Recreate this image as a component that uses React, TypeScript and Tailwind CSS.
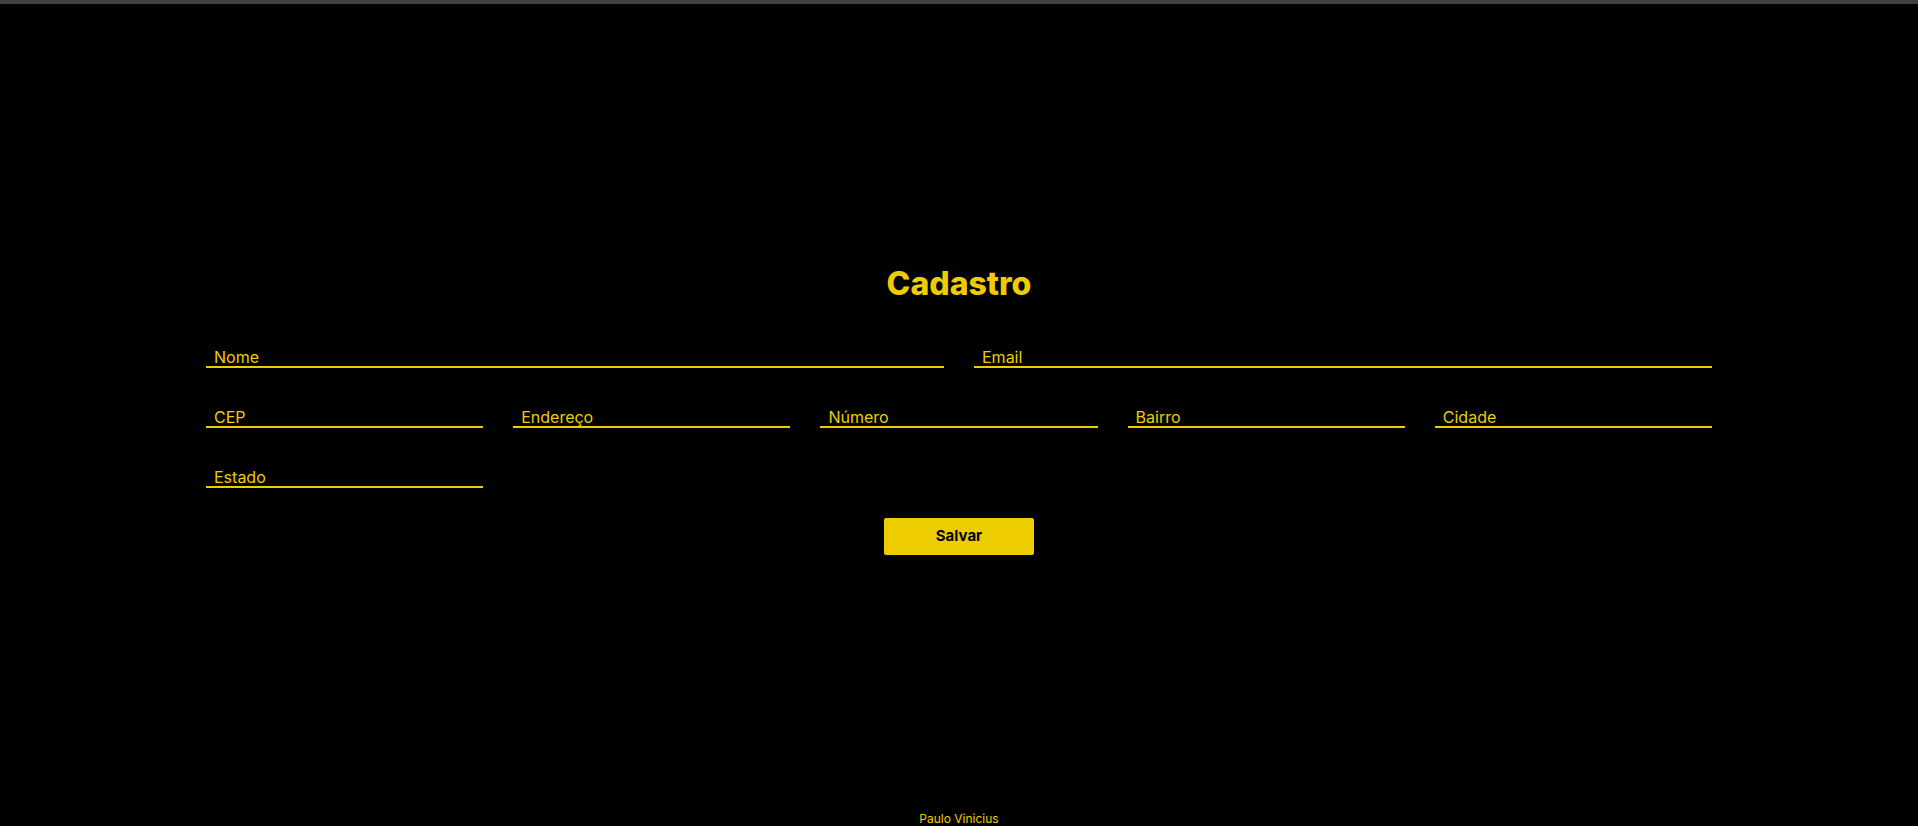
import React from "react";

function Field({ placeholder, type = "text" }: { placeholder: string; type?: string }) {
  return (
    <input
      type={type}
      placeholder={placeholder}
      className="w-full h-[20px] bg-transparent border-0 border-b-2 border-[#eecd00] pl-[8px] text-[16px] leading-[18px] text-[#eecd00] placeholder:text-[#eecd00] outline-none"
    />
  );
}

export default function App() {
  return (
    <div className="h-screen overflow-hidden bg-black flex flex-col font-['Inter',sans-serif]">
      <div className="h-[4px] shrink-0 bg-[#3f4147]" />

      <main className="h-[806px] shrink-0 flex items-center justify-center">
        <form
          className="w-[1506px] flex flex-col items-center"
          onSubmit={(e) => e.preventDefault()}
        >
          <h1 className="text-[32px] leading-[48px] font-extrabold text-[#eecd00] mb-[40px]">Cadastro</h1>

          <div className="w-full grid grid-cols-2 gap-x-[30px]">
            <Field placeholder="Nome" />
            <Field placeholder="Email" type="email" />
          </div>

          <div className="w-full grid grid-cols-5 gap-x-[30px] gap-y-[40px] mt-[40px]">
            <Field placeholder="CEP" />
            <Field placeholder="Endereço" />
            <Field placeholder="Número" />
            <Field placeholder="Bairro" />
            <Field placeholder="Cidade" />
            <Field placeholder="Estado" />
          </div>

          <button
            type="submit"
            className="mt-[30px] w-[150px] h-[37px] rounded-[2px] bg-[#eecd00] text-black text-[15px] font-bold"
          >
            Salvar
          </button>
        </form>
      </main>

      <footer className="shrink-0 text-center text-[12px] leading-[18px] text-[#eecd00]">Paulo Vinicius</footer>
    </div>
  );
}
